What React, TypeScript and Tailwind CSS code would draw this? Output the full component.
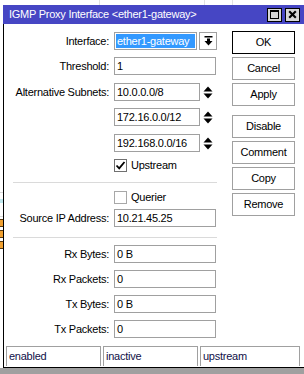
import type { ReactNode } from "react";

const font = "font-['Liberation_Sans',Arial,sans-serif] text-[11px] tracking-[-0.25px]";

function Label({ text }: { text: string }) {
  return <div className="w-[105px] shrink-0 text-right leading-none text-black">{text}</div>;
}

function Box({ value, w }: { value: string; w: string }) {
  return (
    <div className={`${w} h-[18px] border border-[#a0a0a0] bg-white flex items-center pl-[2px] leading-none text-black`}>
      {value}
    </div>
  );
}

function Spin() {
  return (
    <svg width="10" height="13" viewBox="0 0 10 13" className="ml-[3px]">
      <path d="M5 0.5 L9.5 5.5 H0.5Z" fill="#000" />
      <path d="M0.5 7.5 H9.5 L5 12.5Z" fill="#000" />
    </svg>
  );
}

function Row({ label, children, className = "" }: { label: string; children: ReactNode; className?: string }) {
  return (
    <div className={`flex items-center ${className}`}>
      <Label text={label} />
      <div className="ml-[5px] flex items-center">{children}</div>
    </div>
  );
}

function Check({ checked, label, className = "" }: { checked: boolean; label: string; className?: string }) {
  return (
    <div className={`flex items-center ml-[110px] h-[13px] ${className}`}>
      <div
        className={`w-[13px] h-[13px] border bg-white flex items-center justify-center ${
          checked ? "border-[#707070]" : "border-[#a8a8a8]"
        }`}
      >
        {checked && (
          <svg width="11" height="11" viewBox="0 0 11 11">
            <path d="M1.5 5.5 L4.2 8.3 L9.5 2" stroke="#000" strokeWidth="1.8" fill="none" />
          </svg>
        )}
      </div>
      <span className="ml-[4px] leading-none text-black">{label}</span>
    </div>
  );
}

function Btn({ text, main = false, className = "" }: { text: string; main?: boolean; className?: string }) {
  return (
    <div
      className={`h-[23px] w-[63px] flex items-center justify-center bg-white leading-none text-black border ${
        main ? "border-black" : "border-[#a0a0a0]"
      } ${className}`}
    >
      {text}
    </div>
  );
}

export default function App() {
  return (
    <div className={`w-[304px] h-[374px] overflow-hidden bg-white flex flex-col ${font}`}>
      {/* desktop behind the window */}
      <div className="h-[5px] flex">
        <div className="w-[100px] border-r border-[#e2e2e2]" />
        <div className="w-[105px] border-r border-[#e2e2e2]" />
        <div className="w-[28px] border-r border-[#e2e2e2]" />
      </div>

      <div className="flex h-[363px]">
        <div className="w-[3px] flex flex-col">
          <div className="h-[187px]" />
          <div className="h-px bg-[#d8d8d8]" />
          <div className="h-[6px]" />
          <div className="h-[4px] bg-[#bfe8ee]" />
          <div className="h-[13px]" />
          <div className="h-px bg-[#d8d8d8]" />
          <div className="h-[8px] mt-[2px] bg-[#f0a030] border-y border-[#5a3a10]" />
          <div className="h-[8px] mt-[3px] bg-[#f0a030] border-y border-[#5a3a10]" />
          <div className="h-[8px] mt-[3px] bg-[#f0a030] border-y border-[#5a3a10]" />
        </div>

        <div className="flex-1 flex flex-col">
          {/* title bar */}
          <div className="h-[19px] bg-[#4646c4] flex items-center">
            <span className="pl-[6px] text-white leading-none">IGMP Proxy Interface &lt;ether1-gateway&gt;</span>
            <div className="ml-auto flex gap-[3px] pr-[4px]">
              <div className="w-[15px] h-[14px] bg-[#d6d6d6] border border-black flex items-center justify-center">
                <svg width="9" height="9" viewBox="0 0 9 9">
                  <rect x="0.5" y="0.5" width="8" height="8" fill="none" stroke="#000" />
                  <rect x="0" y="0" width="9" height="2" fill="#000" />
                </svg>
              </div>
              <div className="w-[15px] h-[14px] bg-[#d6d6d6] border border-black flex items-center justify-center">
                <svg width="9" height="9" viewBox="0 0 9 9">
                  <path d="M1.2 1.2 L7.8 7.8 M7.8 1.2 L1.2 7.8" stroke="#000" strokeWidth="2.1" />
                </svg>
              </div>
            </div>
          </div>

          {/* window body */}
          <div className="h-[344px] border-l border-b border-black bg-white flex flex-col">
            <div className="flex">
              <div className="w-[212px] flex flex-col pt-[8px]">
                <Row label="Interface:">
                  <div className="w-[83px] h-[18px] border border-[#a0a0a0] bg-white p-[1px]">
                    <div className="h-full bg-[#3399ff] text-white flex items-center pl-px leading-none">ether1-gateway</div>
                  </div>
                  <div className="ml-[2px] w-[18px] h-[18px] border border-[#a0a0a0] bg-white flex items-center justify-center">
                    <svg width="9" height="10" viewBox="0 0 9 10">
                      <rect x="0.5" y="0" width="8" height="1.5" fill="#000" />
                      <rect x="3" y="2.5" width="3" height="2.5" fill="#000" />
                      <path d="M0.5 5 H8.5 L4.5 9.5Z" fill="#000" />
                    </svg>
                  </div>
                </Row>
                <Row label="Threshold:" className="mt-[7px]">
                  <Box value="1" w="w-[102px]" />
                </Row>
                <Row label="Alternative Subnets:" className="mt-[8px]">
                  <Box value="10.0.0.0/8" w="w-[86px]" />
                  <Spin />
                </Row>
                <Row label="" className="mt-[7px]">
                  <Box value="172.16.0.0/12" w="w-[86px]" />
                  <Spin />
                </Row>
                <Row label="" className="mt-[8px]">
                  <Box value="192.168.0.0/16" w="w-[86px]" />
                  <Spin />
                </Row>
                <Check checked label="Upstream" className="mt-[7px]" />
                <div className="mt-[10px] ml-[9px] w-[204px] h-px bg-[#dadada]" />
                <Check checked={false} label="Querier" className="mt-[8px]" />
                <Row label="Source IP Address:" className="mt-[5px]">
                  <Box value="10.21.45.25" w="w-[102px]" />
                </Row>
                <div className="mt-[10px] ml-[9px] w-[204px] h-px bg-[#dadada]" />
                <Row label="Rx Bytes:" className="mt-[7px]">
                  <Box value="0 B" w="w-[102px]" />
                </Row>
                <Row label="Rx Packets:" className="mt-[7px]">
                  <Box value="0" w="w-[102px]" />
                </Row>
                <Row label="Tx Bytes:" className="mt-[7px]">
                  <Box value="0 B" w="w-[102px]" />
                </Row>
                <Row label="Tx Packets:" className="mt-[7px]">
                  <Box value="0" w="w-[102px]" />
                </Row>
              </div>

              <div className="ml-[16px] flex flex-col pt-[7px] gap-[3px]">
                <Btn text="OK" main />
                <Btn text="Cancel" />
                <Btn text="Apply" />
                <Btn text="Disable" className="mt-[6px]" />
                <Btn text="Comment" />
                <Btn text="Copy" />
                <Btn text="Remove" />
              </div>
            </div>

            {/* status bar */}
            <div className="mt-auto pl-[2px] pb-[1px] flex gap-[2px]">
              <div className="w-[95px] h-[20px] border-t border-x border-[#a0a0a0] flex items-center pl-[2px] leading-none text-[#101048]">enabled</div>
              <div className="w-[95px] h-[20px] border-t border-x border-[#a0a0a0] flex items-center pl-[2px] leading-none text-[#101048]">inactive</div>
              <div className="w-[100px] h-[20px] border-t border-x border-[#a0a0a0] flex items-center pl-[2px] leading-none text-[#101048]">upstream</div>
            </div>
          </div>
        </div>
      </div>

      <div className="h-[6px] bg-[#a0a0a0]" />
    </div>
  );
}
